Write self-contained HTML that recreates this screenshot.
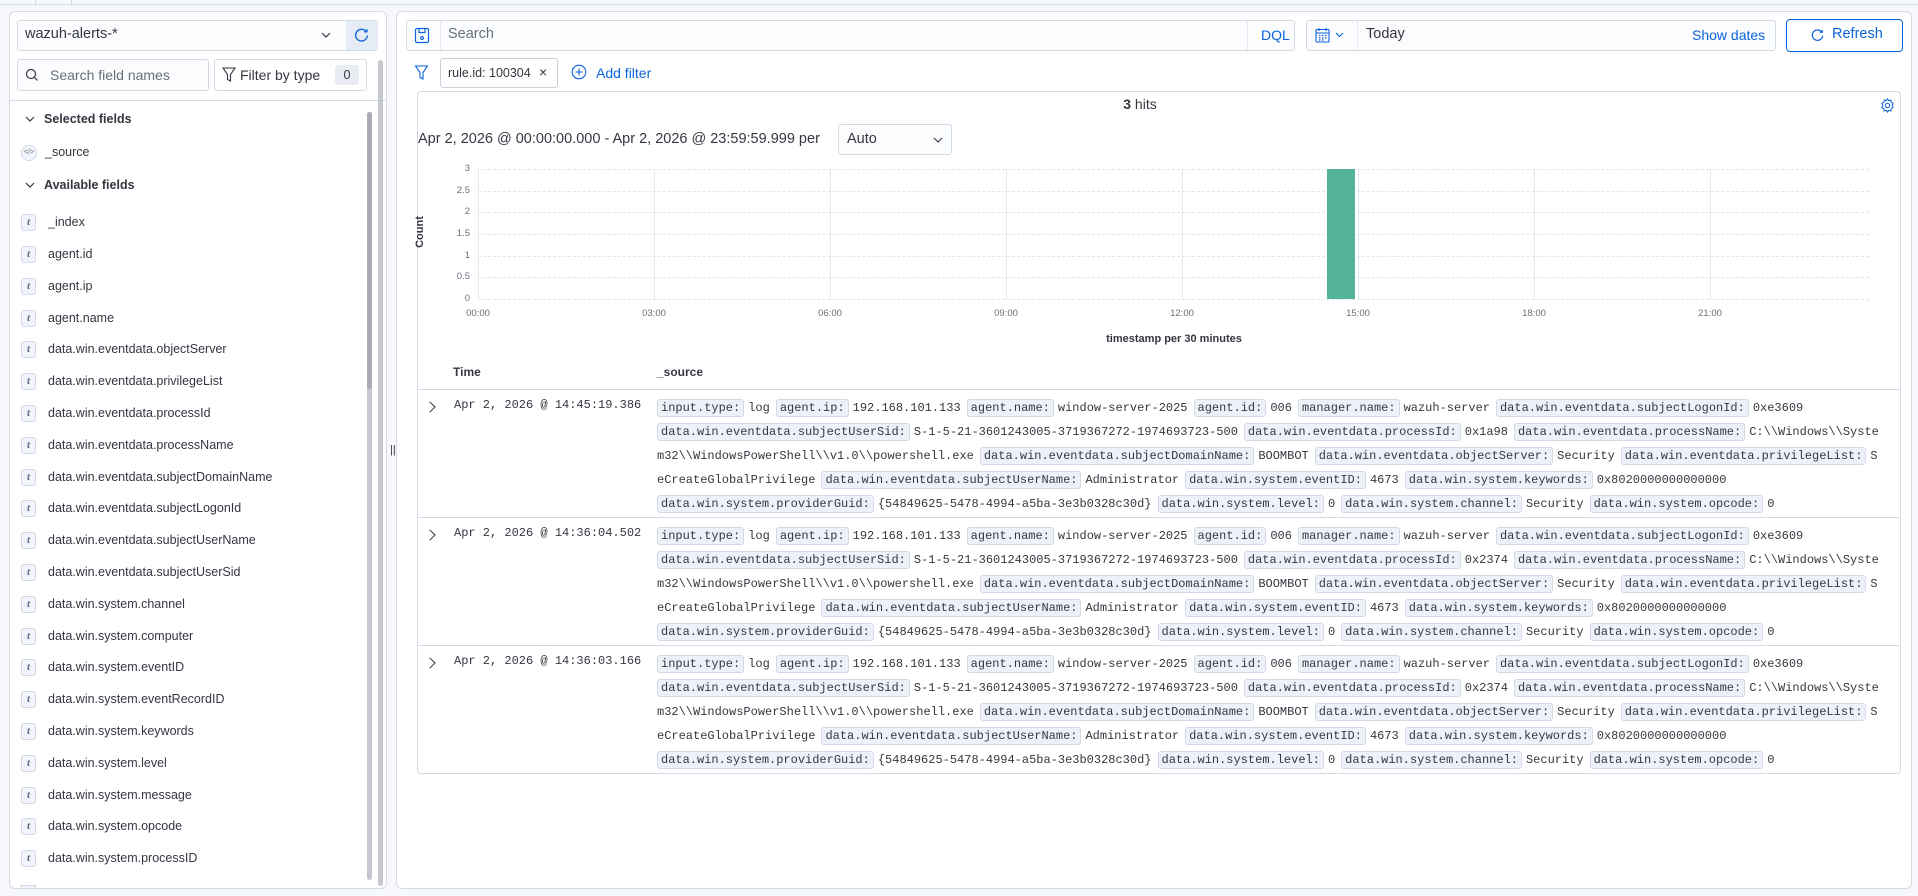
<!DOCTYPE html>
<html><head><meta charset="utf-8">
<style>
*{box-sizing:border-box;margin:0;padding:0}
body{width:1918px;height:896px;background:#f7f8fc;font-family:"Liberation Sans",sans-serif;color:#343741;position:relative;overflow:hidden}
.a{position:absolute}
.panel{position:absolute;background:#fff;border:1px solid #d3dae6;border-radius:6px}
.fld{position:absolute;left:21px;font-size:12.5px;color:#343741;height:18px;line-height:18px;white-space:nowrap}
.fld i{display:inline-block;width:15px;height:17px;border:1px solid #d3dae6;background:#f1f4fa;border-radius:3px;font-size:11px;text-align:center;line-height:15px;color:#5a6b86;margin-right:12px;vertical-align:middle;font-family:"Liberation Serif",serif;font-weight:bold}
.row{position:absolute;left:418px;width:1481px;height:128px;border-bottom:1px solid #d3dae6}
.row .t{position:absolute;left:36px;top:8px;font:12px "Liberation Mono",monospace;color:#343741}
.row .chev{position:absolute;left:8px;top:13px;width:8px;height:8px;border-right:1.5px solid #343741;border-top:1.5px solid #343741;transform:rotate(45deg)}
.src{position:absolute;left:239px;top:6px;width:1240px;height:117px;overflow:hidden;font:12px/24px "Liberation Mono",monospace;color:#343741}
.src div{white-space:nowrap;height:24px}
.c{display:inline-block;background:#eef2f8;border:1px solid #d3dae6;border-radius:3px;padding:0 3px;line-height:16px;margin-right:4px}
.v{margin-right:6px}
.yl{position:absolute;font-size:9.5px;color:#69707d;width:20px;text-align:right;left:450px}
.xl{position:absolute;font-size:9.5px;color:#69707d;top:308px;width:40px;text-align:center}
.hg{position:absolute;left:478px;width:1391px;border-top:1px dashed #e0e4ee;height:0}
.vg{position:absolute;top:169px;height:130px;border-left:1px solid #e3e7ef}
</style></head><body>
<div class="a" style="left:0;top:4px;width:1918px;border-top:1px solid #d3dae6"></div>
<div class="a" style="left:35px;top:0;height:4px;border-left:1px solid #d3dae6"></div>
<div class="a" style="left:71px;top:0;height:4px;border-left:1px solid #d3dae6"></div>

<div class="panel" style="left:9px;top:11px;width:378px;height:878px"></div>
<div class="a" style="left:17px;top:20px;width:361px;height:31px;border:1px solid #d3dae6;background:#fbfcfd;border-radius:3px"></div>
<div class="a" style="left:25px;top:26px;font-size:14.5px;color:#343741">wazuh-alerts-*</div>
<svg class="a" style="left:321px;top:31px" width="10" height="8" viewBox="0 0 10 8"><path d="M1 2l4 4 4-4" fill="none" stroke="#343741" stroke-width="1.2"/></svg>
<div class="a" style="left:346px;top:21px;width:32px;height:29px;background:#e6ecf5"></div>
<svg class="a" style="left:353px;top:27px" width="17" height="17" viewBox="0 0 16 16"><path d="M12.5 4.5A5.5 5.5 0 1 0 13.5 8" fill="none" stroke="#0b64dd" stroke-width="1.3"/><path d="M10.5 4.5h2.5V2" fill="none" stroke="#0b64dd" stroke-width="1.3"/></svg>
<div class="a" style="left:17px;top:59px;width:192px;height:32px;border:1px solid #d3dae6;background:#fbfcfd;border-radius:3px"></div>
<svg class="a" style="left:25px;top:68px" width="14" height="14" viewBox="0 0 14 14"><circle cx="6" cy="6" r="4.5" fill="none" stroke="#343741" stroke-width="1.2"/><path d="M9.5 9.5l3 3" stroke="#343741" stroke-width="1.2"/></svg>
<div class="a" style="left:50px;top:67px;font-size:14px;color:#69707d">Search field names</div>
<div class="a" style="left:214px;top:59px;width:153px;height:32px;border:1px solid #d3dae6;background:#fff;border-radius:3px"></div>
<svg class="a" style="left:222px;top:67px" width="14" height="16" viewBox="0 0 14 16"><path d="M1 1h12L8.5 7.5V14l-3-1.5V7.5z" fill="none" stroke="#343741" stroke-width="1.1"/></svg>
<div class="a" style="left:240px;top:67px;font-size:14px;color:#343741">Filter by type</div>
<div class="a" style="left:335px;top:65px;width:24px;height:20px;background:#e9edf3;border-radius:3px;font-size:12.5px;text-align:center;line-height:20px">0</div>
<div class="a" style="left:10px;top:100px;width:376px;border-top:1px solid #d3dae6"></div>
<svg class="a" style="left:25px;top:116px" width="10" height="7" viewBox="0 0 10 7"><path d="M1 1l4 4 4-4" fill="none" stroke="#343741" stroke-width="1.2"/></svg>
<div class="a" style="left:44px;top:112px;font-size:12.5px;font-weight:bold">Selected fields</div>
<div class="a" style="left:21px;top:145px;width:16px;height:16px;border:1px solid #d3dae6;border-radius:50%;background:#f1f4fa;font-size:7px;text-align:center;line-height:14px;color:#69707d">&lt;/&gt;</div>
<div class="a" style="left:45px;top:145px;font-size:12.5px">_source</div>
<svg class="a" style="left:25px;top:182px" width="10" height="7" viewBox="0 0 10 7"><path d="M1 1l4 4 4-4" fill="none" stroke="#343741" stroke-width="1.2"/></svg>
<div class="a" style="left:44px;top:178px;font-size:12.5px;font-weight:bold">Available fields</div>
<div class="fld" style="top:213px"><i>t</i>_index</div>
<div class="fld" style="top:245px"><i>t</i>agent.id</div>
<div class="fld" style="top:277px"><i>t</i>agent.ip</div>
<div class="fld" style="top:309px"><i>t</i>agent.name</div>
<div class="fld" style="top:340px"><i>t</i>data.win.eventdata.objectServer</div>
<div class="fld" style="top:372px"><i>t</i>data.win.eventdata.privilegeList</div>
<div class="fld" style="top:404px"><i>t</i>data.win.eventdata.processId</div>
<div class="fld" style="top:436px"><i>t</i>data.win.eventdata.processName</div>
<div class="fld" style="top:468px"><i>t</i>data.win.eventdata.subjectDomainName</div>
<div class="fld" style="top:499px"><i>t</i>data.win.eventdata.subjectLogonId</div>
<div class="fld" style="top:531px"><i>t</i>data.win.eventdata.subjectUserName</div>
<div class="fld" style="top:563px"><i>t</i>data.win.eventdata.subjectUserSid</div>
<div class="fld" style="top:595px"><i>t</i>data.win.system.channel</div>
<div class="fld" style="top:627px"><i>t</i>data.win.system.computer</div>
<div class="fld" style="top:658px"><i>t</i>data.win.system.eventID</div>
<div class="fld" style="top:690px"><i>t</i>data.win.system.eventRecordID</div>
<div class="fld" style="top:722px"><i>t</i>data.win.system.keywords</div>
<div class="fld" style="top:754px"><i>t</i>data.win.system.level</div>
<div class="fld" style="top:786px"><i>t</i>data.win.system.message</div>
<div class="fld" style="top:817px"><i>t</i>data.win.system.opcode</div>
<div class="fld" style="top:849px"><i>t</i>data.win.system.processID</div>
<div class="a" style="left:21px;top:885px;width:15px;height:3px;border:1px solid #d3dae6;border-bottom:none;background:#f1f4fa"></div>
<div class="a" style="left:367px;top:112px;width:5px;height:768px;background:#c5c8ce;border-radius:3px"></div>
<div class="a" style="left:367px;top:112px;width:5px;height:277px;background:#a8abb2;border-radius:3px"></div>
<div class="a" style="left:378px;top:60px;width:5px;height:826px;background:#c5c8ce;border-radius:3px"></div>
<div class="a" style="left:390px;top:444px;font-size:11px;color:#343741">||</div>

<div class="panel" style="left:396px;top:11px;width:1516px;height:878px"></div>
<div class="a" style="left:406px;top:20px;width:889px;height:31px;border:1px solid #d3dae6;background:#fbfcfd;border-radius:3px"></div>
<div class="a" style="left:440px;top:21px;height:29px;border-left:1px solid #e3e7ef"></div>
<svg class="a" style="left:414px;top:27px" width="16" height="17" viewBox="0 0 16 17"><rect x="1.5" y="1.5" width="13" height="14" rx="1.5" fill="none" stroke="#0b64dd" stroke-width="1.2"/><path d="M5 1.5v4h6v-4" fill="none" stroke="#0b64dd" stroke-width="1.2"/><circle cx="8" cy="11" r="1.4" fill="none" stroke="#0b64dd" stroke-width="1.1"/></svg>
<div class="a" style="left:448px;top:26px;font-size:14.5px;color:#69707d">Search</div>
<div class="a" style="left:1247px;top:21px;height:29px;border-left:1px solid #e3e7ef"></div>
<div class="a" style="left:1261px;top:27px;font-size:14px;color:#0b64dd">DQL</div>
<div class="a" style="left:1306px;top:20px;width:470px;height:31px;border:1px solid #d3dae6;background:#fbfcfd;border-radius:3px"></div>
<div class="a" style="left:1357px;top:21px;height:29px;border-left:1px solid #e3e7ef"></div>
<svg class="a" style="left:1315px;top:27px" width="15" height="16" viewBox="0 0 15 16"><rect x="1" y="2.5" width="13" height="12.5" rx="1" fill="none" stroke="#0b64dd" stroke-width="1.1"/><path d="M1 6h13M4 1v3M11 1v3" stroke="#0b64dd" stroke-width="1.1"/><path d="M4 8.5h1.5M7 8.5h1.5M10 8.5h1.5M4 11h1.5M7 11h1.5M10 11h1.5M4 13h1.5M7 13h1.5" stroke="#0b64dd" stroke-width="1.2"/></svg>
<svg class="a" style="left:1335px;top:32px" width="9" height="6" viewBox="0 0 9 6"><path d="M1 1l3.5 3.5L8 1" fill="none" stroke="#0b64dd" stroke-width="1.1"/></svg>
<div class="a" style="left:1366px;top:26px;font-size:14.5px;color:#343741">Today</div>
<div class="a" style="left:1692px;top:27px;font-size:14px;color:#0b64dd">Show dates</div>
<div class="a" style="left:1786px;top:19px;width:117px;height:33px;border:1px solid #0b64dd;border-radius:4px;background:#fff"></div>
<svg class="a" style="left:1810px;top:28px" width="15" height="15" viewBox="0 0 16 16"><path d="M12.5 4.5A5.5 5.5 0 1 0 13.5 8" fill="none" stroke="#0b64dd" stroke-width="1.3"/><path d="M10.5 4.5h2.5V2" fill="none" stroke="#0b64dd" stroke-width="1.3"/></svg>
<div class="a" style="left:1832px;top:26px;font-size:14.5px;color:#0b64dd">Refresh</div>

<svg class="a" style="left:414px;top:65px" width="15" height="16" viewBox="0 0 14 16"><path d="M1 1h12L8.5 7.5V14l-3-1.5V7.5z" fill="none" stroke="#0b64dd" stroke-width="1.1"/></svg>
<div class="a" style="left:440px;top:58px;width:118px;height:30px;border:1px solid #c9d0dc;border-radius:3px;background:#fff"></div>
<div class="a" style="left:448px;top:66px;font-size:12.5px;color:#343741">rule.id: 100304</div>
<div class="a" style="left:539px;top:64px;font-size:14px;color:#343741">×</div>
<svg class="a" style="left:571px;top:64px" width="16" height="16" viewBox="0 0 16 16"><circle cx="8" cy="8" r="6.8" fill="none" stroke="#0b64dd" stroke-width="1.1"/><path d="M8 4.5v7M4.5 8h7" stroke="#0b64dd" stroke-width="1.1"/></svg>
<div class="a" style="left:596px;top:65px;font-size:14px;color:#0b64dd">Add filter</div>

<div class="a" style="left:417px;top:91px;width:1484px;height:683px;border:1px solid #d3dae6;border-radius:4px;background:#fff"></div>
<div class="a" style="left:1100px;top:96px;width:80px;text-align:center;font-size:14px"><b>3</b> hits</div>
<svg class="a" style="left:1880px;top:98px" width="15" height="15" viewBox="0 0 16 16"><path d="M8 1l1.3 1.8 2.2-.5.5 2.2L14 5.8 13 8l1 2.2-2 1.3-.5 2.2-2.2-.5L8 15l-1.3-1.8-2.2.5-.5-2.2L2 10.2 3 8 2 5.8l2-1.3.5-2.2 2.2.5z" fill="none" stroke="#0b64dd" stroke-width="1.1"/><circle cx="8" cy="8" r="2.3" fill="none" stroke="#0b64dd" stroke-width="1.1"/></svg>
<div class="a" style="left:418px;top:131px;font-size:14.5px;color:#343741">Apr 2, 2026 @ 00:00:00.000 - Apr 2, 2026 @ 23:59:59.999 per</div>
<div class="a" style="left:838px;top:124px;width:114px;height:31px;border:1px solid #d3dae6;background:#fbfcfd;border-radius:3px"></div>
<div class="a" style="left:847px;top:131px;font-size:14.5px">Auto</div>
<svg class="a" style="left:933px;top:137px" width="10" height="7" viewBox="0 0 10 7"><path d="M1 1l4 4 4-4" fill="none" stroke="#343741" stroke-width="1.1"/></svg>

<div class="hg" style="top:169px"></div><div class="hg" style="top:191px"></div><div class="hg" style="top:212px"></div><div class="hg" style="top:234px"></div><div class="hg" style="top:256px"></div><div class="hg" style="top:277px"></div><div class="hg" style="top:299px"></div>
<div class="vg" style="left:478px"></div><div class="vg" style="left:654px"></div><div class="vg" style="left:830px"></div><div class="vg" style="left:1006px"></div><div class="vg" style="left:1182px"></div><div class="vg" style="left:1358px"></div><div class="vg" style="left:1534px"></div><div class="vg" style="left:1710px"></div>
<div class="a" style="left:1327px;top:169px;width:28px;height:130px;background:#54b399"></div>
<div class="yl" style="top:163px">3</div><div class="yl" style="top:185px">2.5</div><div class="yl" style="top:206px">2</div><div class="yl" style="top:228px">1.5</div><div class="yl" style="top:250px">1</div><div class="yl" style="top:271px">0.5</div><div class="yl" style="top:293px">0</div>
<div class="xl" style="left:458px">00:00</div><div class="xl" style="left:634px">03:00</div><div class="xl" style="left:810px">06:00</div><div class="xl" style="left:986px">09:00</div><div class="xl" style="left:1162px">12:00</div><div class="xl" style="left:1338px">15:00</div><div class="xl" style="left:1514px">18:00</div><div class="xl" style="left:1690px">21:00</div>
<div class="a" style="left:404px;top:226px;font-size:11px;font-weight:bold;transform:rotate(-90deg);color:#343741">Count</div>
<div class="a" style="left:1074px;top:333px;width:200px;text-align:center;font-size:11px;font-weight:bold;color:#343741">timestamp per 30 minutes</div>

<div class="a" style="left:453px;top:365px;font-size:12px;font-weight:bold">Time</div>
<div class="a" style="left:657px;top:365px;font-size:12px;font-weight:bold">_source</div>
<div class="a" style="left:418px;top:389px;width:1482px;border-top:1px solid #d3dae6"></div>

<div class="row" style="top:390px"><div class="chev"></div><div class="t">Apr 2, 2026 @ 14:45:19.386</div><div class="src">
<div><span class="c">input.type:</span><span class="v">log</span><span class="c">agent.ip:</span><span class="v">192.168.101.133</span><span class="c">agent.name:</span><span class="v">window-server-2025</span><span class="c">agent.id:</span><span class="v">006</span><span class="c">manager.name:</span><span class="v">wazuh-server</span><span class="c">data.win.eventdata.subjectLogonId:</span><span class="v">0xe3609</span></div>
<div><span class="c">data.win.eventdata.subjectUserSid:</span><span class="v">S-1-5-21-3601243005-3719367272-1974693723-500</span><span class="c">data.win.eventdata.processId:</span><span class="v">0x1a98</span><span class="c">data.win.eventdata.processName:</span>C:\\Windows\\Syste</div>
<div><span class="v">m32\\WindowsPowerShell\\v1.0\\powershell.exe</span><span class="c">data.win.eventdata.subjectDomainName:</span><span class="v">BOOMBOT</span><span class="c">data.win.eventdata.objectServer:</span><span class="v">Security</span><span class="c">data.win.eventdata.privilegeList:</span>S</div>
<div><span class="v">eCreateGlobalPrivilege</span><span class="c">data.win.eventdata.subjectUserName:</span><span class="v">Administrator</span><span class="c">data.win.system.eventID:</span><span class="v">4673</span><span class="c">data.win.system.keywords:</span><span class="v">0x8020000000000000</span></div>
<div><span class="c">data.win.system.providerGuid:</span><span class="v">{54849625-5478-4994-a5ba-3e3b0328c30d}</span><span class="c">data.win.system.level:</span><span class="v">0</span><span class="c">data.win.system.channel:</span><span class="v">Security</span><span class="c">data.win.system.opcode:</span><span class="v">0</span></div>
</div></div>

<div class="row" style="top:518px"><div class="chev"></div><div class="t">Apr 2, 2026 @ 14:36:04.502</div><div class="src">
<div><span class="c">input.type:</span><span class="v">log</span><span class="c">agent.ip:</span><span class="v">192.168.101.133</span><span class="c">agent.name:</span><span class="v">window-server-2025</span><span class="c">agent.id:</span><span class="v">006</span><span class="c">manager.name:</span><span class="v">wazuh-server</span><span class="c">data.win.eventdata.subjectLogonId:</span><span class="v">0xe3609</span></div>
<div><span class="c">data.win.eventdata.subjectUserSid:</span><span class="v">S-1-5-21-3601243005-3719367272-1974693723-500</span><span class="c">data.win.eventdata.processId:</span><span class="v">0x2374</span><span class="c">data.win.eventdata.processName:</span>C:\\Windows\\Syste</div>
<div><span class="v">m32\\WindowsPowerShell\\v1.0\\powershell.exe</span><span class="c">data.win.eventdata.subjectDomainName:</span><span class="v">BOOMBOT</span><span class="c">data.win.eventdata.objectServer:</span><span class="v">Security</span><span class="c">data.win.eventdata.privilegeList:</span>S</div>
<div><span class="v">eCreateGlobalPrivilege</span><span class="c">data.win.eventdata.subjectUserName:</span><span class="v">Administrator</span><span class="c">data.win.system.eventID:</span><span class="v">4673</span><span class="c">data.win.system.keywords:</span><span class="v">0x8020000000000000</span></div>
<div><span class="c">data.win.system.providerGuid:</span><span class="v">{54849625-5478-4994-a5ba-3e3b0328c30d}</span><span class="c">data.win.system.level:</span><span class="v">0</span><span class="c">data.win.system.channel:</span><span class="v">Security</span><span class="c">data.win.system.opcode:</span><span class="v">0</span></div>
</div></div>

<div class="row" style="top:646px;border-bottom:none"><div class="chev"></div><div class="t">Apr 2, 2026 @ 14:36:03.166</div><div class="src">
<div><span class="c">input.type:</span><span class="v">log</span><span class="c">agent.ip:</span><span class="v">192.168.101.133</span><span class="c">agent.name:</span><span class="v">window-server-2025</span><span class="c">agent.id:</span><span class="v">006</span><span class="c">manager.name:</span><span class="v">wazuh-server</span><span class="c">data.win.eventdata.subjectLogonId:</span><span class="v">0xe3609</span></div>
<div><span class="c">data.win.eventdata.subjectUserSid:</span><span class="v">S-1-5-21-3601243005-3719367272-1974693723-500</span><span class="c">data.win.eventdata.processId:</span><span class="v">0x2374</span><span class="c">data.win.eventdata.processName:</span>C:\\Windows\\Syste</div>
<div><span class="v">m32\\WindowsPowerShell\\v1.0\\powershell.exe</span><span class="c">data.win.eventdata.subjectDomainName:</span><span class="v">BOOMBOT</span><span class="c">data.win.eventdata.objectServer:</span><span class="v">Security</span><span class="c">data.win.eventdata.privilegeList:</span>S</div>
<div><span class="v">eCreateGlobalPrivilege</span><span class="c">data.win.eventdata.subjectUserName:</span><span class="v">Administrator</span><span class="c">data.win.system.eventID:</span><span class="v">4673</span><span class="c">data.win.system.keywords:</span><span class="v">0x8020000000000000</span></div>
<div><span class="c">data.win.system.providerGuid:</span><span class="v">{54849625-5478-4994-a5ba-3e3b0328c30d}</span><span class="c">data.win.system.level:</span><span class="v">0</span><span class="c">data.win.system.channel:</span><span class="v">Security</span><span class="c">data.win.system.opcode:</span><span class="v">0</span></div>
</div></div>
</body></html>
